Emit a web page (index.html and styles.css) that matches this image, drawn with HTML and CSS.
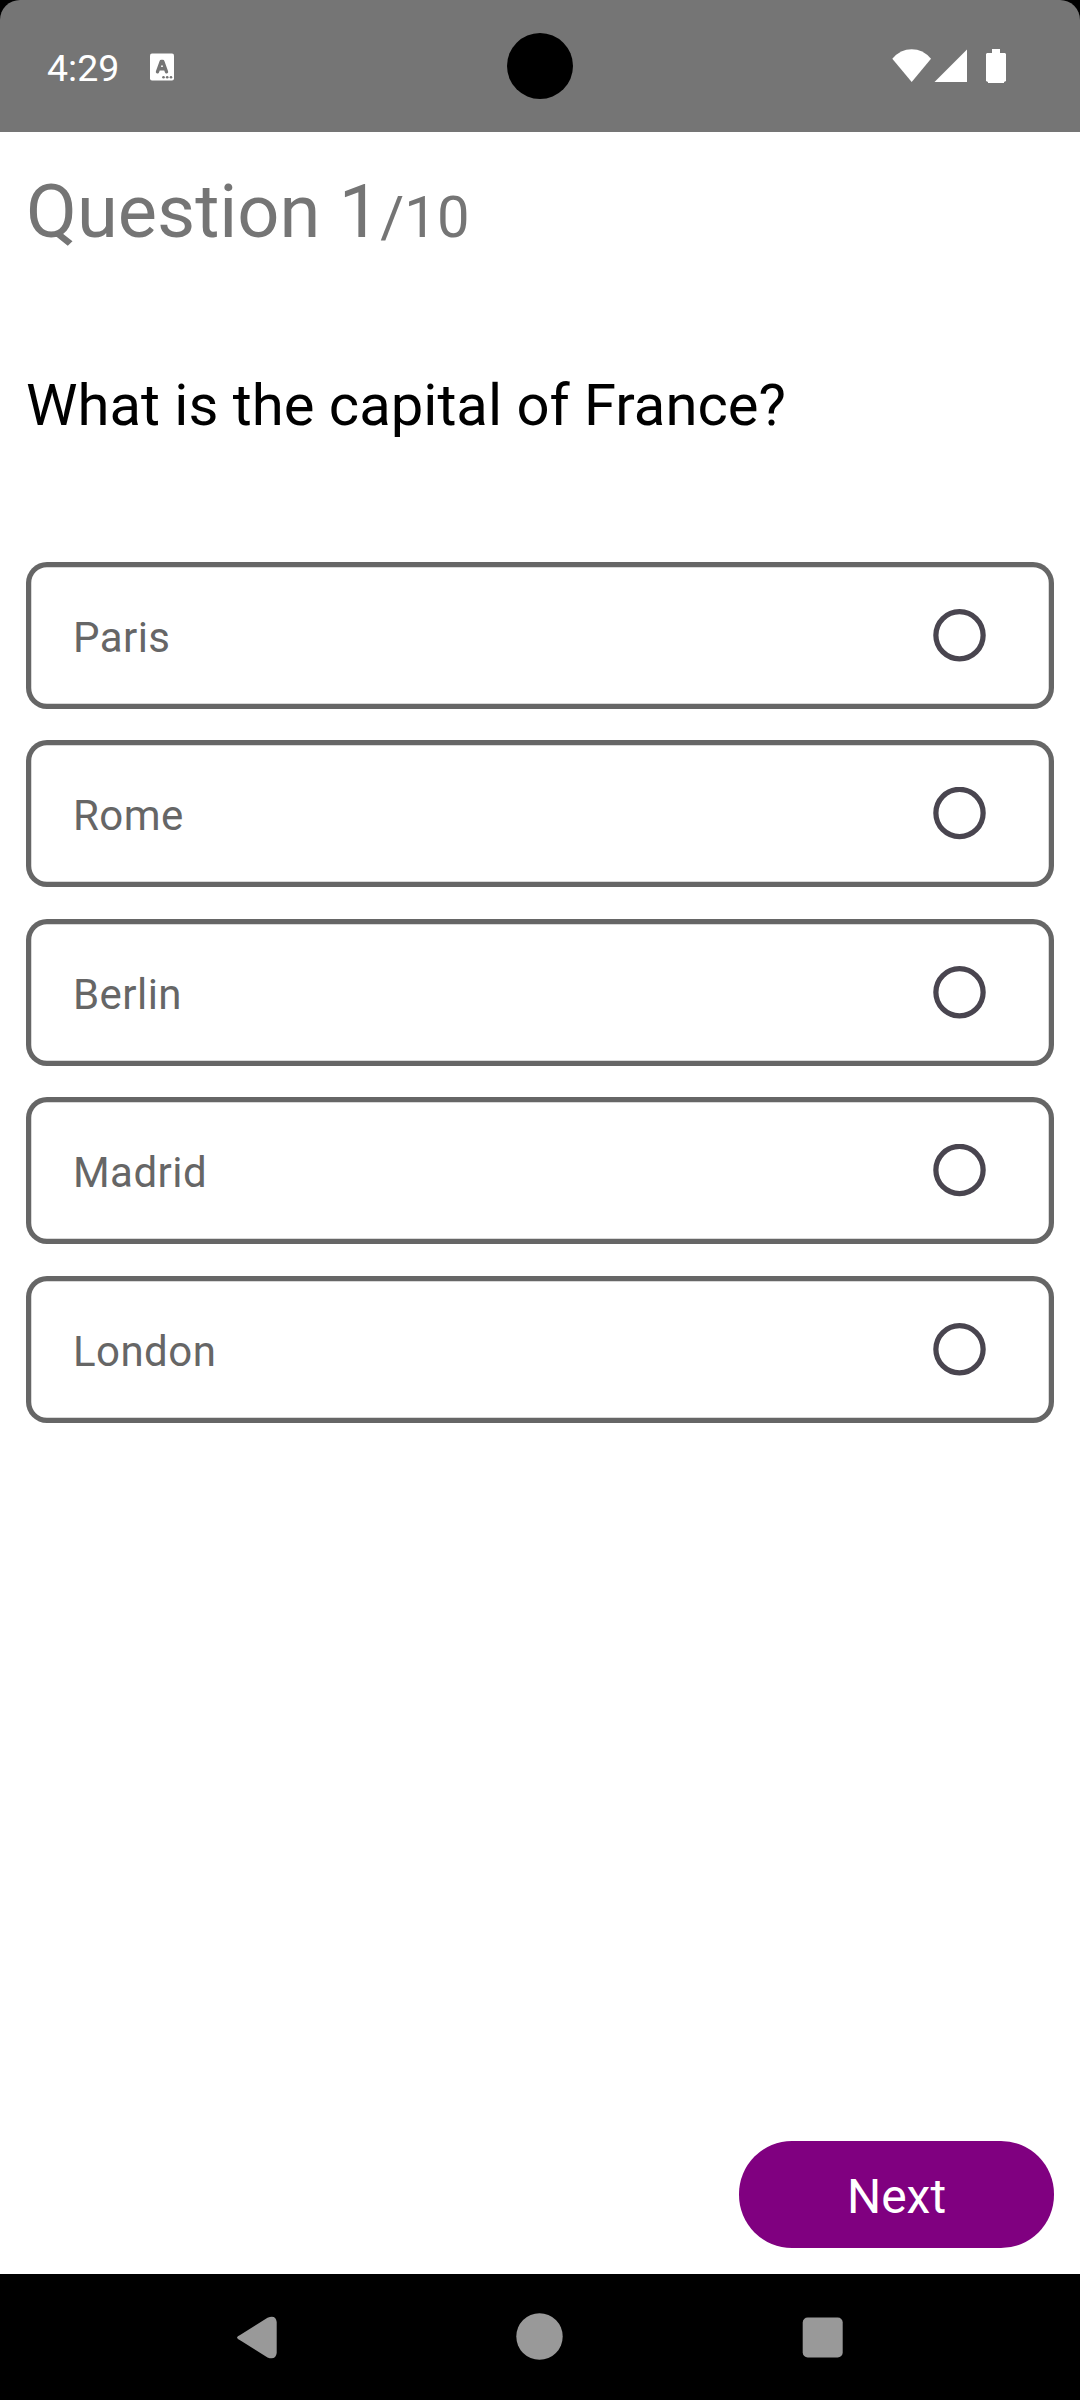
FILE: index.html
```html
<!DOCTYPE html>
<html lang="en">
<head>
<meta charset="utf-8">
<title>Quiz</title>
<link rel="stylesheet" href="styles.css">
</head>
<body>
<div class="screen">
  <header class="status">
    <div class="status-bar">
      <span class="clock">4:29</span>
      <svg class="notif" width="26" height="28" viewBox="0 0 26 28"><rect x="1" y=".5" width="24" height="27" rx="2" fill="#fff"/><path d="M8.500 18.800 12.200 8.500h1.600L17.500 18.800M10 15.800h6" fill="none" stroke="#757575" stroke-width="3.400" stroke-linecap="round" stroke-linejoin="round"/><g fill="#757575"><circle cx="14.500" cy="24.200" r="1.300"/><circle cx="18.200" cy="24.200" r="1.300"/><circle cx="22" cy="24.200" r="1.300"/></g></svg>
      <svg class="wifi" width="40" height="34" viewBox="0 0 40 34"><path d="M.3 9.700Q8.500 .3 19.700 .3T39 9.700L19.700 33Z" fill="#fff"/></svg>
      <svg class="signal" width="34" height="34" viewBox="0 0 34 34"><path d="M.5 33H33V.5Z" fill="#fff"/></svg>
      <svg class="battery" width="20" height="34" viewBox="0 0 20 34"><path d="M6 0h8v4h5l1 1v27l-2 1v1H2v-1l-2-1V5l1-1h5Z" fill="#fff"/></svg>
    </div>
    <div class="camera"></div>
  </header>
  <main class="quiz">
    <h1 class="progress">Question 1<span class="total">/10</span></h1>
    <p class="question">What is the capital of France?</p>
    <div class="options">
      <div class="option"><span class="label">Paris</span><svg class="radio" viewBox="0 0 54 54"><circle cx="27.500" cy="26.250" r="23.625"/></svg></div>
      <div class="option"><span class="label">Rome</span><svg class="radio" viewBox="0 0 54 54"><circle cx="27.500" cy="26" r="23.625"/></svg></div>
      <div class="option"><span class="label">Berlin</span><svg class="radio" viewBox="0 0 54 54"><circle cx="27.500" cy="26.250" r="23.625"/></svg></div>
      <div class="option"><span class="label">Madrid</span><svg class="radio" viewBox="0 0 54 54"><circle cx="27.500" cy="26" r="23.625"/></svg></div>
      <div class="option"><span class="label">London</span><svg class="radio" viewBox="0 0 54 54"><circle cx="27.500" cy="26.250" r="23.625"/></svg></div>
    </div>
    <button class="next">Next</button>
  </main>
  <nav class="navbar">
    <svg width="54" height="54" viewBox="0 0 54 54"><path d="M10.500 24.700 37.500 7.800Q45.700 4.500 46.700 12V43Q45.700 50.500 37.500 47.500L10.500 30.500Q3.500 27.500 10.500 24.700Z"/></svg>
    <svg width="54" height="54" viewBox="0 0 54 54"><circle cx="26.500" cy="26.500" r="23.200"/></svg>
    <svg width="54" height="54" viewBox="0 0 54 54"><rect x="6.700" y="7.500" width="40" height="40" rx="5"/></svg>
  </nav>
</div>
</body>
</html>
```
FILE: styles.css
```css
* { box-sizing: border-box; }
body {
  margin: 0;
  background: #000;
  font-family: Roboto, sans-serif;
}
.screen {
  display: flex;
  flex-direction: column;
  width: 1080px;
  height: 2400px;
}
.status {
  position: relative;
  height: 132px;
  background: #757575;
  border-radius: 20px 20px 0 0;
}
.status-bar {
  display: flex;
  align-items: flex-start;
  height: 132px;
  padding: 49px 74px 0 47px;
}
.clock {
  margin-top: -2px;
  width: 72px;
  font-size: 37.5px;
  line-height: 43px;
  color: #fff;
}
.notif { margin: 4px auto 0 30px; }
.wifi { margin-right: 2px; }
.signal { margin-right: 18px; }
.camera {
  position: absolute;
  left: 507px;
  top: 33px;
  width: 66px;
  height: 66px;
  border-radius: 50%;
  background: #000;
}
.quiz {
  display: flex;
  flex-direction: column;
  height: 2142px;
  padding: 37px 26px 26px;
  background: #fff;
}
.progress {
  margin: 0;
  height: 86px;
  font-size: 74px;
  font-weight: 400;
  line-height: 86px;
  color: #757575;
}
.total { font-size: 58px; }
.question {
  margin: 116px 0 123px;
  height: 68px;
  font-size: 58px;
  line-height: 68px;
  color: #000;
}
.options { display: flex; flex-direction: column; }
.option {
  display: flex;
  align-items: center;
  justify-content: space-between;
  height: 147px;
  margin-bottom: 32px;
  padding: 0 68px 0 47px;
  border-radius: 21px;
  box-shadow: inset 0 0 0 5.25px #666;
}
.option:nth-child(odd) { margin-bottom: 31px; }
.label {
  font-size: 42px;
  line-height: 50px;
  letter-spacing: .45px;
  color: #666;
  padding-top: 5px;
}
.radio {
  width: 54px;
  height: 54px;
  fill: none;
  stroke: #49454f;
  stroke-width: 5.25;
}
.next {
  align-self: flex-end;
  width: 315px;
  height: 107px;
  margin-top: auto;
  padding: 4px 0 0;
  border: 0;
  border-radius: 53px;
  background: purple;
  color: #fff;
  font: 400 48px/56px Roboto, sans-serif;
}
.navbar {
  display: flex;
  justify-content: space-between;
  height: 126px;
  padding: 36px 230px 0;
  background: #000;
  fill: #999;
}
```
